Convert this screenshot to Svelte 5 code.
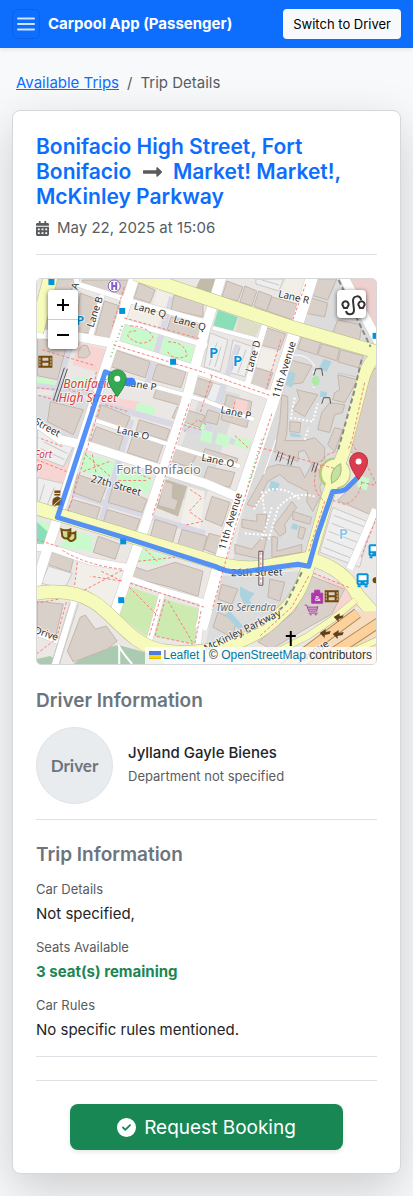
<script>
  const areas = [
    ['grey', '36,395 93,400 57,519 36,500'],
    ['grey', '308,279 350,279 377,345 377,360 355,405 345,450 318,545 308,562 232,568 240,525'],
    ['grey', '218,577 300,572 285,605 262,628 205,650'],
    ['mall', '350,279 377,279 377,333 368,315'],
    ['grey', '205,385 240,395 205,500 160,500'],
    ['beige', '77,562 125,572 110,608 73,588'],
    ['beige', '130,300 162,313 155,333 128,320'],
    ['beige', '157,290 172,295 165,313 152,310'],
    ['beige', '260,348 278,352 273,370 253,367'],
    ['beige', '286,279 312,279 304,302 278,296'],
    ['beige', '188,487 205,492 200,530 180,527'],
    ['pink', '78,343 108,350 100,373 72,365'],
    ['pink', '107,397 140,402 136,415 104,405'],
    ['pink', '36,455 70,465 62,490 36,478'],
    ['pink', '312,573 352,588 365,603 335,620 332,612 345,593'],
    ['green', '126,324 157,335 153,352 121,342'],
    ['green', '163,337 195,348 190,365 160,357'],
    ['green', '36,376 57,382 56,390 36,386'],
    ['green', '62,380 92,377 86,394 58,394'],
    ['green', '137,403 155,407 153,419 135,414'],
    ['green', '182,420 205,425 203,436 180,430'],
    ['green', '83,453 115,463 110,478 80,472'],
    ['green', '120,467 152,478 148,495 117,483'],
    ['green', '67,530 92,537 92,552 60,548'],
    ['green', '36,519 51,526 51,535 40,540'],
    ['green', '138,548 170,558 158,566 134,562'],
    ['green', '371,388 377,380 377,397 369,396'],
    ['teal', '218,310 238,317 233,332 213,327'],
    ['teal', '36,522 50,535 38,552 36,552'],
    ['olive', '239,317 261,325 255,339 235,332'],
    ['darkolive', '200,279 217,279 212,297 194,292'],
    ['grass', '128,587 160,598 147,638 117,615'],
    ['grass', '165,600 200,610 195,645 153,637'],
    ['wood', '73,665 92,652 118,646 155,656 165,665'],
    ['wood', '36,660 50,657 60,665 36,665'],
    ['darkolive', '160,478 187,487 178,517 155,508'],
    ['parking', '210,333 228,340 220,372 204,367'],
    ['parking', '233,340 253,347 245,377 227,372'],
    ['parking', '37,430 73,447 63,467 37,457'],
    ['parking', '37,478 63,484 53,507 37,503'],
    ['parking', '333,508 372,524 360,568 320,553'],
    ['parking', '256,279 284,279 279,291 256,284'],
    ['parking', '210,382 226,387 220,404 205,400'],
    ['parking', '48,567 72,574 64,590 41,584']
  ];

  const buildings = [
    '56,279 75,279 66,305 50,300', '41,318 60,303 75,305 68,335 40,330', '80,293 98,300 90,333 75,333',
    '104,301 123,307 111,341 95,335', '82,280 128,280 122,297 84,287', '139,283 155,290 150,303 134,298',
    '174,295 203,303 203,317 171,310', '171,317 202,326 197,341 166,333', '115,350 150,362 145,378 111,367',
    '157,364 186,372 181,388 152,380', '227,281 243,287 238,301 222,297', '245,286 257,291 252,306 240,302',
    '259,291 272,296 267,311 254,306', '272,297 297,304 293,320 267,311', '267,328 286,334 280,350 260,345',
    '253,367 273,373 267,390 248,385', '308,297 328,303 325,317 305,313', '315,279 337,279 328,300 311,295',
    '338,320 362,325 360,340 333,333', '302,337 321,343 317,355 298,349', '322,344 340,349 337,361 318,355',
    '341,350 364,356 359,368 338,362', '37,337 66,347 57,380 37,376', '50,402 83,410 73,435 47,422',
    '188,375 213,383 207,398 184,390', '157,388 185,397 181,406 153,398',
    '290,360 312,366 303,383 288,385', '297,390 318,395 305,417 293,410 300,400',
    '338,375 358,380 345,403 333,400 335,393 340,390', '330,403 345,405 343,413 335,415 330,433 318,430 322,413',
    '335,428 343,430 335,452 328,445', '290,422 301,423 300,433 290,432',
    '282,395 288,397 288,412 287,435 285,441 305,441 315,438 325,448 325,460 312,465 305,451 299,452 298,462 275,450 280,422',
    '278,465 300,468 305,478 312,465 325,475 320,488 322,495 313,512 307,502 308,492 288,482 280,475 268,482 255,508 247,505 268,468',
    '242,520 257,522 257,515 267,515 265,533 242,528', '292,502 297,508 285,525 286,533 280,537 273,528',
    '293,512 312,518 310,525 293,520', '272,537 278,538 277,552 302,545 302,553 272,558',
    '235,545 252,550 262,538 267,538 262,560 235,554', '300,527 306,529 303,540 298,538',
    '227,395 252,402 247,428 221,420',
    '369,373 377,368 377,518 338,501 359,480 366,460 350,452', '101,405 130,417 124,432 96,422',
    '96,427 123,437 118,452 90,443', '133,435 163,445 157,463 127,453', '139,420 170,430 166,441 136,431',
    '77,475 107,485 100,503 73,493', '113,485 147,500 142,513 108,503', '72,500 100,508 95,523 65,515',
    '107,510 140,520 135,533 103,523', '177,407 205,416 200,428 172,418', '170,447 197,455 190,468 167,460',
    '164,482 173,484 172,498 178,501 175,511 158,506', '212,497 230,503 222,527 205,520', '155,520 177,527 172,545 150,538',
    '182,530 207,537 202,556 177,548', '208,467 235,473 230,488 203,481', '205,449 238,459 235,468 201,458',
    '208,410 220,414 217,425 204,422', '98,537 120,545 115,560 93,553', '50,552 73,560 70,573 47,565',
    '37,602 63,605 55,638 37,635', '80,618 85,616 95,630 106,627 117,642 107,650 73,663 67,652',
    '130,566 147,572 175,563 203,572 198,597 170,588 130,578', '222,585 238,590 232,605 218,600',
    '270,580 285,583 280,602 268,598', '218,613 237,622 232,638 213,628',
    '312,577 345,590 332,615 302,632 272,650 258,643 295,612', '209,534 224,538 219,556 204,550'
  ];

  // Drawn over the buildings that surround them.
  const courts = [
    ['pink', '236,399 248,402 245,419 232,414'],
    ['green', '202,430 213,433 211,444 200,441'],
    ['green', '218,433 231,437 228,448 215,444'],
    ['green', '236,437 251,441 249,450 234,446'],
    ['green', '360,476 370,479 367,491 357,487']
  ];

  const lanes = [
    'M172,297 L147,385', 'M70,346 L53,403', 'M131,420 L100,525', 'M72,494 L205,534', 'M97,403 L250,447',
    'M36,386 L95,394 M60,378 L62,400', 'M238,345 L205,440'
  ];

  const roads = [
    ['M313,275 L272,405 L228,535 L201,630', 12],
    ['M135,275 L95,400 L57,519 L34,590', 10],
    ['M222,275 L205,330 L185,405 L140,540 L113,618', 10],
    ['M34,334 L68,335 L110,343 L205,373 L278,398', 9],
    ['M34,422 L60,440 L90,447 L205,484 L236,497', 9],
    ['M343,275 L380,344', 9],
    ['M75,275 L77,284 L133,302 L205,322', 5],
    ['M102,295 L90,337', 5],
    ['M120,320 L207,346', 5],
    ['M130,380 L205,401 L254,420', 4],
    ['M93,420 L163,443 L240,467', 4],
    ['M265,325 L247,386', 6],
    ['M213,328 L258,340', 4],
    ['M34,548 L52,549 L90,562 L126,568', 7],
    ['M125,578 L165,592 L207,604', 6],
    ['M162,594 L149,642', 6],
    ['M203,600 L198,645', 6],
    ['M74,600 L54,668', 7],
    ['M36,634 L64,645', 5],
    ['M376,510 L350,570', 7]
  ];

  const avenues = [
    ['M52,270 L36,332', 14],
    ['M135,274 L205,298 L288,326 L380,353', 13],
    ['M380,355 Q368,360 362,385 L345,450 L328,497 L308,568', 12],
    ['M30,507 L57,515 L117,533 L205,560 Q238,572 265,567 L308,559 Q345,569 358,596 L382,623', 13],
    ['M30,595 Q68,588 92,602 C115,615 130,647 165,652 C215,659 260,637 278,617 Q300,600 309,565', 13]
  ];

  const footways = [
    'M42,350 L95,366 M96,372 L90,412 M60,402 L36,395 M113,345 L205,373 M124,318 L200,339',
    'M130,326 Q148,326 153,338 Q142,349 128,337 Q126,331 136,331 M168,342 Q185,342 187,356 Q173,362 167,351',
    'M124,287 L112,327 M306,284 L293,320 M281,340 L266,390 M210,375 L271,396 M212,376 L200,414',
    'M100,405 L68,512 M189,404 L152,517 M272,414 L236,525 L212,611 M62,447 L38,438',
    'M85,455 L110,477 M109,462 L83,472 M92,455 L96,474 M118,481 L148,481 M120,467 L152,480',
    'M190,490 L202,498 L189,512 L203,522 L184,526 M206,425 L198,420 L184,432',
    'M264,449 L335,469 M317,470 Q310,490 325,502 L309,552 M365,383 L353,438 L349,449 M352,444 L366,463 L377,485',
    'M62,551 Q86,566 123,570 M77,563 L74,588 M122,571 L82,592 M101,572 L122,582 L90,577',
    'M66,603 L57,636 M130,584 L204,608 M129,588 L158,617 M160,600 L149,637 M168,602 L193,644 M201,612 L195,644',
    'M165,600 L155,637 L193,645 M379,513 L361,559 M309,577 L292,608 L260,637 M314,574 L351,589 M36,655 L58,638',
    'M333,501 L345,505 Q360,500 362,482 M362,483 L377,486 M138,562 L175,558 M145,550 L157,562',
    'M36,460 L66,472 M36,388 L58,390 M64,385 Q75,398 88,386 M105,405 L128,412 M235,402 L232,418',
    'M201,430 L183,425 M235,436 L248,448 M58,600 L36,604 M36,540 L60,548 M321,468 Q320,455 338,452'
  ];

  const paths = [
    'M295,398 L291,418 L313,422 L318,404 M254,510 Q262,495 270,490 Q288,488 300,500 M262,492 L265,515',
    'M314,371 L314,388 M305,440 L309,428 M272,508 L262,540 M315,497 Q292,491 278,509 L269,540 M245,534 L270,536'
  ];

  const labels = [
    ['Lane B', 93, 328, -72, 10], ['A', 77, 290, -72, 10], ['Lane Q', 133, 309, 16, 10], ['Lane Q', 173, 322, 16, 10],
    ['Lane R', 278, 297, 13, 10], ['Lane P', 125, 386, 9, 10], ['Lane P', 220, 413, 12, 10], ['Lane O', 116, 433, 13, 10],
    ['Lane O', 201, 461, 12, 10], ['Lane D', 252, 373, -74, 10], ['11th Avenue', 279, 399, -73, 10],
    ['11th Avenue', 225, 551, -73, 10], ['27th Street', 90, 482, 16, 10], ['Street', 33, 424, 29, 10],
    ['26th Street', 231, 577, -1, 10], ['McKinley Parkway', 206, 653, -26, 10], ['Drive', 33, 634, 18, 10],
    ['Avenue', 300, 665, -32, 10]
  ];

  const stops = [[48, 279], [119, 308], [170, 359], [120, 539], [118, 598], [373, 333]];

  const details = [
    { label: 'Car Details', value: 'Not specified,' },
    { label: 'Seats Available', value: '3 seat(s) remaining', good: true },
    { label: 'Car Rules', value: 'No specific rules mentioned.' }
  ];
</script>

<header class="topbar">
  <button class="menu" type="button" aria-label="Menu">
    <svg width="18" height="14" viewBox="0 0 18 14"><path d="M1 1.5h16M1 7h16M1 12.5h16" stroke="currentColor" stroke-width="2" stroke-linecap="round" /></svg>
  </button>
  <a class="brand" href="#home">Carpool App (Passenger)</a>
  <button class="switch" type="button">Switch to Driver</button>
</header>

<main>
  <nav class="crumbs" aria-label="Breadcrumb">
    <a href="#trips">Available Trips</a><span>/</span><span>Trip Details</span>
  </nav>

  <article class="card">
    <h1>
      Bonifacio High Street, Fort Bonifacio
      <svg class="arrow" viewBox="0 0 448 512" aria-label="to"><path fill="currentColor" d="M313.941 216H12c-6.627 0-12 5.373-12 12v56c0 6.627 5.373 12 12 12h301.941v46.059c0 21.382 25.851 32.09 40.971 16.971l86.059-86.059c9.373-9.373 9.373-24.569 0-33.941l-86.059-86.059c-15.119-15.119-40.971-4.411-40.971 16.971V216z" /></svg>
      Market! Market!, McKinley Parkway
    </h1>
    <p class="date">
      <svg width="13" height="15" viewBox="0 0 448 512"><path fill="currentColor" fill-rule="evenodd" d="M400 64h-48V16c0-8.800-7.200-16-16-16h-32c-8.800 0-16 7.200-16 16v48H160V16c0-8.800-7.200-16-16-16h-32c-8.800 0-16 7.200-16 16v48H48C21.500 64 0 85.500 0 112v48h448v-48c0-26.500-21.500-48-48-48zM0 192v272c0 26.500 21.500 48 48 48h352c26.500 0 48-21.500 48-48V192zM64 256h64v64H64zm128 0h64v64h-64zm128 0h64v64h-64zM64 384h64v64H64zm128 0h64v64h-64zm128 0h64v64h-64z" /></svg>
      May 22, 2025 at 15:06
    </p>
    <hr />

    <section class="map" aria-label="Route map">
      <svg class="tiles" viewBox="36 279 341 386" preserveAspectRatio="xMidYMid slice">
        <rect x="0" y="250" width="450" height="450" fill="#eae7e4" />
        {#each areas as [kind, points]}<polygon class={kind} {points} />{/each}
        {#each lanes as d}<path class="line" {d} stroke="#d9d9e5" stroke-width="6" />{/each}
        {#each buildings as points}<polygon class="building" {points} />{/each}
        {#each courts as [kind, points]}<polygon class={kind} {points} />{/each}
        <path class="water" d="M324 359l8 3-5 10-8-3zM289 371l7 3-4 14-6-3zM290 433l10 2 2 3-11-1zM271 481l9 3-3 8-8-2zM240 587l9 5 6 2-5 6 3 10-9-5-4-9zM230 612l14 16-4 4-15-17zM321 391l7 2-2 5-6-1zM293 524l6 2-2 5-6-2z" />
        <path class="line" d="M43 442l24 12M40 449l24 11M44 485l-5 17M54 488l-7 17M217 343l-8 23M221 347l-6 20M240 348l-8 22M246 350l-8 23M334 516l35 13M332 524l34 13M329 532l34 13M327 540l34 13M324 548l33 13M262 280l17 5M338 373l18 4" stroke="#c9c7c5" stroke-width="1" />
        {#each paths as d}<path class="line" {d} stroke="#fff" stroke-width="2" stroke-dasharray="2 2" />{/each}
        <path class="line" d="M294 355q16 0 21 12M276 440l-12 35" stroke="#fff" stroke-width="1" />
        {#each roads as [d, w]}<path class="line" {d} stroke="#d3cfcb" stroke-width={w + 1} />{/each}
        {#each roads as [d, w]}<path class="line" {d} stroke="#fff" stroke-width={w} />{/each}
        <path class="line" d="M70 603L51 665M78 605L59 665" stroke="#c8c8c4" stroke-width="1" />
        {#each avenues as [d, w]}<path class="line" {d} stroke="#b9bb82" stroke-width={w + 1} />{/each}
        <circle cx="335" cy="474" r="16" fill="#b9c982" />
        {#each avenues as [d, w]}<path class="line" {d} stroke="#f6fabb" stroke-width={w} />{/each}
        <circle cx="336" cy="474" r="14" fill="#f6fabb" />
        <path d="M341 464q3 14-9 20q-3-14 9-20z" fill="#c5e1a0" stroke="#a2b574" />
        <polygon points="377,612 377,665 285,665 345,612" fill="#f7dcc0" />
        <path class="line" d="M280 672L358 614M306 672L380 623" stroke="#a98c50" stroke-width="11" />
        <path class="line" d="M280 672L358 614M306 672L380 623" stroke="#fcd19c" stroke-width="9" />
        <path class="line" d="M245 669L308 637L333 620L356 601M318 669L380 640" stroke="#b9bb82" stroke-width="7" />
        <path class="line" d="M245 669L308 637L333 620L356 601M318 669L380 640" stroke="#f6fabb" stroke-width="6" />
        <path d="M334 618l6-4v3l4-1-1 3-4 1v3zM320 634l6-4v3l5-1-1 3-5 1v3zM333 635l6-4v3l5-1-1 3-5 1v3z" fill="#5f4020" />
        <path class="line" d="M118 646q5 9 14 19M119 648v17" stroke="#fff" stroke-width="2" />
        {#each footways as d}<path class="line" {d} stroke="#f4817a" stroke-width="1" stroke-dasharray="3 2" />{/each}
        <path class="line" d="M339 280l18 38 14 29M362 360l-8 34-16 58M302 573l-16 32-22 20-30 15" stroke="#8a8a8d" stroke-width="2" stroke-dasharray="5 3" />
        <path class="line" d="M122 326l-12 32M262 440l-9 30-6 20" stroke="#7fc97f" stroke-width="2" stroke-dasharray="1 3" />
        <path d="M259 552h4v34h-4z" fill="#fff" stroke="#555" stroke-width="1" />
        <path class="line" d="M261 553v32M277 456l15 6" stroke="#f4817a" stroke-dasharray="3 2" />
        <path class="line" d="M279 452l-3 9M283 453l-3 9M290 456l-2 9M294 457l-3 9M315 463l-3 9M318 464l-3 9M64 368l-11 33M67 369l-11 33M314 376l2-7h6l1 7M322 404l2-6h6l1 6" stroke="#555" stroke-width="1" />
        <ellipse cx="316" cy="381" rx="4" ry="5" fill="#aee9a5" />
        <path class="statue" d="M78 352q3-9 9-6l3 8-4 4h-8z" />

        {#each stops as [x, y]}<rect {x} {y} width="6" height="6" fill="#0092da" />{/each}

        <g class="labels">
          {#each labels as [text, x, y, angle, size]}
            <text {x} {y} font-size={size} transform="rotate({angle} {x} {y})">{text}</text>
          {/each}
          <text class="red" x="63" y="388" font-size="12">Bonifacio</text>
          <text class="red" x="58" y="402" font-size="12">High Street</text>
          <text class="red" x="34" y="458" font-size="10">Fort</text>
          <text class="red" x="36" y="470" font-size="10">p</text>
          <text class="muted" x="116" y="475" font-size="13">Fort Bonifacio</text>
          <text class="italic" x="216" y="612" font-size="10">Two Serendra</text>
          <text class="park" x="209" y="358" font-size="15">P</text>
          <text class="park" x="233" y="366" font-size="15">P</text>
          <text class="park faint" x="339" y="540" font-size="15">P</text>
          <text class="park" x="76" y="325" font-size="13">P</text>
        </g>

        <circle cx="114" cy="286" r="6" fill="#fff" stroke="#8461c4" stroke-width="1" />
        <path d="M112 282v8M116 282v8M112 286h4" stroke="#8461c4" stroke-width="2" fill="none" />
        <g id="film">
          <path d="M38 356h14v12H38zM42 358v3h6v-3zM42 363v3h6v-3zM39 358v2h1v-2zM39 361v2h1v-2zM39 364v2h1v-2zM50 358v2h1v-2zM50 361v2h1v-2zM50 364v2h1v-2z" fill="#734a08" fill-rule="evenodd" />
        </g>
        <use href="#film" x="287" y="235" />
        <path d="M54 491h6v5h-6zM52 506v-4q0-4 5-5 5 1 5 5v4z" fill="#734a08" />
        <path d="M53 506l8-7M53 494h8" stroke="#e8dccb" stroke-width="1" />
        <path d="M61 530q5 2 9 0v6q-4 6-8 1zM68 533q4 2 7 0v6q-4 5-7 1z" fill="#cfdc91" stroke="#734a08" stroke-width="2" />
        <path d="M312 594h11v10h-11zM315 594v-3h5v3" fill="#ac39ac" stroke="#ac39ac" />
        <text x="315" y="602" font-size="8" fill="#fff" class="amp">&amp;</text>
        <path d="M305 606h2l2 6h8l1-5M308 608h10M309 610h8M309 614h9" fill="none" stroke="#ac39ac" stroke-width="1" />
        <path d="M310 615h2v1h-2zM315 615h2v1h-2z" fill="#ac39ac" />
        <path d="M291 632v15M286 637h10" stroke="#000" stroke-width="2" fill="none" />
        <g id="bus">
          <rect x="357" y="574" width="12" height="12" rx="2" fill="#0092da" />
          <path d="M359 576h8v5h-8zM359 583h2v1h-2zM365 583h2v1h-2z" fill="#fff" />
          <path d="M358 586h3v2h-3zM365 586h3v2h-3z" fill="#0092da" />
        </g>
        <use href="#bus" x="12" y="-29" />
        <circle cx="376" cy="581" r="3" fill="#734a08" />

        <path class="line" d="M133 382Q124 384 117 377L105 372L57 518L130 540L215 567Q230 575 248 572L298 565L309 567L318 535L333 492Q345 493 349 487L358 478" stroke="#3d82fa" stroke-opacity=".88" stroke-width="5" stroke-linejoin="round" stroke-linecap="round" />
        <path class="line" d="M125 382H131" stroke="#3d82fa" stroke-width="8" stroke-linecap="round" />
        <path d="M117 397q-9-12-9-18a9 9 0 0 1 18 0q0 6-9 18z" fill="#34a853" stroke="#2a8c45" stroke-width="1" />
        <circle cx="117" cy="379" r="3" fill="#fff" />
        <path d="M359 480q-9-12-9-18a9 9 0 0 1 18 0q0 6-9 18z" fill="#dc3c50" stroke="#b92c40" stroke-width="1" />
        <circle cx="359" cy="462" r="3" fill="#fff" />
      </svg>

      <div class="zoom">
        <button type="button" aria-label="Zoom in"><svg width="12" height="12" viewBox="0 0 12 12"><path d="M6 0v12M0 6h12" stroke="currentColor" stroke-width="2" /></svg></button>
        <button type="button" aria-label="Zoom out"><svg width="12" height="12" viewBox="0 0 12 12"><path d="M0 6h12" stroke="currentColor" stroke-width="2" /></svg></button>
      </div>
      <button class="router" type="button" aria-label="Toggle directions">
        <svg width="29" height="28" viewBox="0 0 29 28" fill="none" stroke="#333" stroke-width="2">
          <path d="M9 21c1 5 8 4 8-1l-1-9c0-6 8-6 8-1" />
          <path d="M7 18l-1-2a3 3 0 1 1 5 0l-1 2zM23 18l-1-2a3 3 0 1 1 5 0l-1 2z" />
        </svg>
      </button>
      <div class="credit">
        <svg width="12" height="8" viewBox="0 0 12 8"><path fill="#4c7be1" d="M0 0h12v4H0z" /><path fill="#ffd500" d="M0 4h12v3H0z" /><path fill="#e0bc00" d="M0 7h12v1H0z" /></svg><a class="leaflet" href="#leaflet">Leaflet</a> | © <a href="#osm">OpenStreetMap</a> contributors
      </div>
    </section>

    <h2>Driver Information</h2>
    <section class="driver">
      <div class="avatar">Driver</div>
      <div>
        <p class="name">Jylland Gayle Bienes</p>
        <p class="small">Department not specified</p>
      </div>
    </section>
    <hr />

    <h2>Trip Information</h2>
    <dl>
      {#each details as item}
        <div>
          <dt>{item.label}</dt>
          <dd class:good={item.good}>{item.value}</dd>
        </div>
      {/each}
    </dl>
    <hr />
    <hr class="last" />

    <button class="book" type="button">
      <svg width="19" height="19" viewBox="0 0 512 512"><path fill="currentColor" fill-rule="evenodd" d="M256 512A256 256 0 1 0 256 0a256 256 0 1 0 0 512zM369 209L241 337c-9.400 9.400-24.600 9.400-33.900 0l-64-64c-9.400-9.400-9.400-24.600 0-33.900s24.600-9.400 33.900 0l47 47L335 175c9.400-9.400 24.600-9.400 33.900 0s9.400 24.600 0 33.900z" /></svg>
      Request Booking
    </button>
  </article>
</main>

<style>
  :global(body) {
    background: #f8f9fa;
    color: #212529;
    font: 15px/24px Inter, sans-serif;
    overflow-x: hidden;
  }
  :global(*) { box-sizing: border-box; }
  button { font-family: inherit; cursor: pointer; }
  h1, h2, p, dl, dd { margin: 0; }

  .topbar {
    display: flex;
    align-items: center;
    gap: 8px;
    height: 48px;
    padding: 0 12px;
    background: #0d6efd;
    box-shadow: 0 2px 4px rgba(0, 0, 0, .075);
  }
  .menu {
    display: grid;
    place-items: center;
    width: 28px;
    height: 30px;
    padding: 0;
    border: 1px solid #0c62e2;
    border-radius: 6px;
    background: none;
    color: #cfe2ff;
  }
  .brand { color: #fff; font-weight: 700; text-decoration: none; }
  .switch {
    height: 30px;
    margin-left: auto;
    padding: 0 10px;
    border: 0;
    border-radius: 4px;
    background: #f8f9fa;
    color: #000;
    font-size: 13px;
  }

  main { padding: 23px 12px; }
  .crumbs { display: flex; gap: 8px; padding: 0 4px; color: #595c5f; }
  .crumbs a { color: #0d6efd; }

  .card {
    margin-top: 15px;
    padding: 23px;
    border: 1px solid #d5d7d9;
    border-radius: 8px;
    background: #fff;
    box-shadow: 0 16px 48px rgba(0, 0, 0, .175);
  }
  h1 { color: #0d6efd; font-size: 21px; line-height: 25px; font-weight: 600; }
  .arrow { width: 19px; height: 22px; margin: 0 6px; vertical-align: -4px; color: #595c5f; }
  .date { display: flex; align-items: center; gap: 8px; margin-top: 7px; color: #595c5f; }
  hr { height: 1px; margin: 14px 0 23px; border: 0; background: #dee2e6; }

  .map {
    position: relative;
    height: 387px;
    overflow: hidden;
    border: 1px solid #d5d7d9;
    border-radius: 5px;
  }
  .tiles { display: block; width: 100%; height: 100%; }
  .line { fill: none; }
  .grey { fill: #dcdcdc; }
  .mall { fill: #eed0cf; }
  .beige { fill: #f2efe9; }
  .pink { fill: #f7d5d2; }
  .green { fill: #c8facc; }
  .teal { fill: #8adfb9; }
  .olive { fill: #ddddc8; }
  .darkolive { fill: #c2bbaa; }
  .grass { fill: #cdebb0; }
  .wood { fill: #aacbaf; }
  .parking { fill: #eee; stroke: #cbc9c7; }
  .building, .statue { fill: #d9d0c9; stroke: #c4b6ab; stroke-width: 1; }
  .water { fill: #aad3df; }
  .labels {
    fill: #333;
    font-family: "Noto Sans", sans-serif;
    paint-order: stroke;
    stroke: rgba(255, 255, 255, .6);
    stroke-width: 2px;
  }
  .labels .red { fill: #d9403a; font-style: italic; }
  .labels .muted { fill: #777; stroke: #fff; }
  .labels .italic { fill: #666; font-style: italic; }
  .labels .park { fill: #0092da; font-weight: 600; }
  .labels .faint { fill: #8cc6e4; }
  .amp { font-family: "Noto Sans", sans-serif; }

  .zoom, .router { position: absolute; top: 11px; border-radius: 4px; background: #fff; box-shadow: 0 1px 4px rgba(0, 0, 0, .6); }
  .zoom { left: 11px; width: 30px; overflow: hidden; }
  .zoom button { display: grid; place-items: center; width: 30px; height: 29px; padding: 0; border: 0; background: #fff; color: #000; }
  .zoom button + button { border-top: 1px solid #ccc; height: 30px; }
  .router { right: 10px; display: grid; place-items: center; width: 29px; height: 28px; padding: 0; border: 0; }
  .credit {
    position: absolute;
    right: 0;
    bottom: 0;
    padding: 0 4px;
    background: rgba(255, 255, 255, .8);
    color: #333;
    font: 12px/17px "Liberation Sans", sans-serif;
    white-space: nowrap;
  }
  .credit a { color: #0078a8; text-decoration: none; }
  .leaflet { margin-left: 2px; }

  h2 { color: #6c757d; font-size: 19px; line-height: 24px; font-weight: 600; }
  .map + h2 { margin-top: 24px; }
  .driver { display: flex; align-items: center; gap: 15px; margin: 14px 0 15px; }
  .avatar {
    display: grid;
    place-items: center;
    width: 77px;
    height: 77px;
    border: 1px solid #dee2e6;
    border-radius: 50%;
    background: #e9ecef;
    color: #6c757d;
    font: 700 17px/24px Lato, sans-serif;
  }
  .name { font-weight: 500; }
  .small, dt { color: #595c5f; font-size: 13px; line-height: 24px; }
  .driver p:last-child { padding-bottom: 2px; line-height: 23px; }
  dl { display: grid; gap: 9px; margin-top: 10px; }
  dd { line-height: 25px; }
  .good { color: #198754; font-weight: 700; }
  .last { margin-top: 0; }
  .book {
    display: flex;
    align-items: center;
    justify-content: center;
    gap: 8px;
    width: 80%;
    height: 46px;
    margin: 0 auto;
    border: 0;
    border-radius: 8px;
    background: #198754;
    box-shadow: 0 2px 4px rgba(0, 0, 0, .1);
    color: #fff;
    font-size: 19px;
  }
</style>
